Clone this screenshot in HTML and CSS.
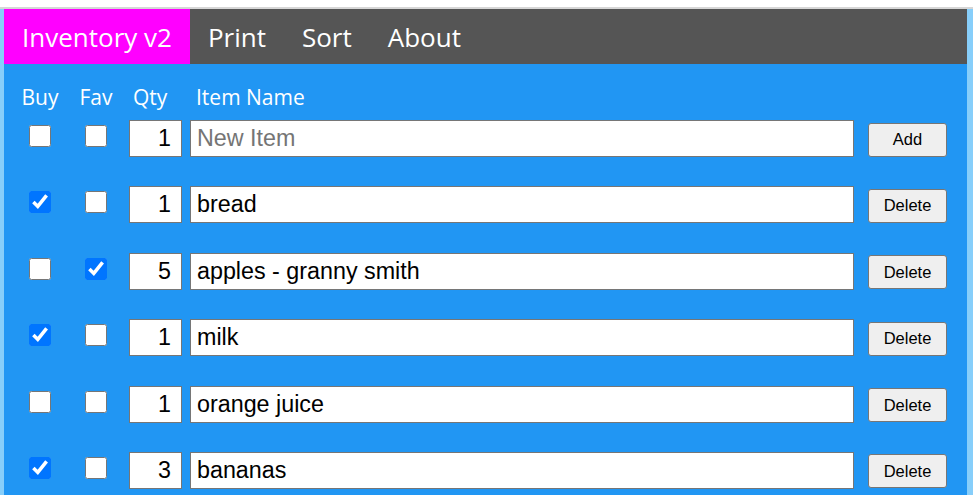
FILE: index.html
```html
<!DOCTYPE html>
<html>
<head>
<meta charset="utf-8">
<title>Inventory v2</title>
<link rel="stylesheet" href="styles.css">
</head>
<body>
<div class="topline"></div>
<div class="frame">
  <div class="app">
    <nav class="nav">
      <a class="nav-item brand">Inventory v2</a>
      <a class="nav-item">Print</a>
      <a class="nav-item">Sort</a>
      <a class="nav-item">About</a>
    </nav>
    <main class="main">
      <div class="cols head-row">
        <div class="head center">Buy</div>
        <div class="head center">Fav</div>
        <div class="head qty-h">Qty</div>
        <div class="head name-h">Item Name</div>
        <div class="head"></div>
      </div>
      <div class="cols rows">
        <div class="cell center"><input type="checkbox" class="cb"></div>
        <div class="cell center"><input type="checkbox" class="cb"></div>
        <div class="cell"><input type="text" class="qty" value="1"></div>
        <div class="cell"><input type="text" class="name" placeholder="New Item"></div>
        <div class="cell end"><button class="btn">Add</button></div>

        <div class="cell center"><input type="checkbox" class="cb" checked></div>
        <div class="cell center"><input type="checkbox" class="cb"></div>
        <div class="cell"><input type="text" class="qty" value="1"></div>
        <div class="cell"><input type="text" class="name" value="bread"></div>
        <div class="cell end"><button class="btn">Delete</button></div>

        <div class="cell center"><input type="checkbox" class="cb"></div>
        <div class="cell center"><input type="checkbox" class="cb" checked></div>
        <div class="cell"><input type="text" class="qty" value="5"></div>
        <div class="cell"><input type="text" class="name" value="apples - granny smith"></div>
        <div class="cell end"><button class="btn">Delete</button></div>

        <div class="cell center"><input type="checkbox" class="cb" checked></div>
        <div class="cell center"><input type="checkbox" class="cb"></div>
        <div class="cell"><input type="text" class="qty" value="1"></div>
        <div class="cell"><input type="text" class="name" value="milk"></div>
        <div class="cell end"><button class="btn">Delete</button></div>

        <div class="cell center"><input type="checkbox" class="cb"></div>
        <div class="cell center"><input type="checkbox" class="cb"></div>
        <div class="cell"><input type="text" class="qty" value="1"></div>
        <div class="cell"><input type="text" class="name" value="orange juice"></div>
        <div class="cell end"><button class="btn">Delete</button></div>

        <div class="cell center"><input type="checkbox" class="cb" checked></div>
        <div class="cell center"><input type="checkbox" class="cb"></div>
        <div class="cell"><input type="text" class="qty" value="3"></div>
        <div class="cell"><input type="text" class="name" value="bananas"></div>
        <div class="cell end"><button class="btn">Delete</button></div>
      </div>
    </main>
  </div>
</div>
</body>
</html>
```

FILE: styles.css
```css
html, body {
  margin: 0;
  padding: 0;
  background: #ffffff;
  height: 100%;
  overflow: hidden;
}

.topline {
  height: 7px;
  background: #ffffff;
  border-bottom: 2px solid #d6d6d6;
}

.frame {
  background: #87cefa;
  padding: 0 6px 0 4px;
  height: 486px;
}

.app {
  height: 100%;
  display: flex;
  flex-direction: column;
}

.nav {
  display: flex;
  height: 55px;
  background: #555555;
  font-family: "Open Sans", sans-serif;
  font-size: 26px;
}

.nav-item {
  display: flex;
  align-items: center;
  padding: 1px 18px 0;
  color: #ffffff;
}

.brand {
  background: #ff00ff;
}

.main {
  flex: 1;
  background: #2196f3;
  padding: 20px 0 0 13px;
}

.cols {
  display: grid;
  grid-template-columns: 46px 50px 53px 664px 85px;
  column-gap: 8px;
}

.head-row {
  height: 26px;
  margin-bottom: 10px;
}

.rows {
  row-gap: 29.4px;
  align-items: center;
}

.head {
  font-family: "Open Sans", sans-serif;
  font-size: 21px;
  color: #ffffff;
  line-height: 26px;
  white-space: nowrap;
}

.center {
  display: flex;
  justify-content: center;
}

.end {
  display: flex;
  justify-content: flex-end;
}

.qty-h {
  padding-left: 4px;
}

.name-h {
  padding-left: 6px;
}

.cell {
  height: 37px;
  align-items: center;
}

.cb {
  width: 22px;
  height: 22px;
  margin: 0 0 5px 0;
}

.qty, .name {
  box-sizing: border-box;
  height: 37px;
  width: 100%;
  margin: 0;
  border: 1px solid #767676;
  border-radius: 0;
  background: #ffffff;
  font-family: "Liberation Sans", Arial, sans-serif;
  font-size: 23.3px;
  color: #000000;
  outline: none;
}

.qty {
  text-align: right;
  padding: 0 10px 0 2px;
}

.name {
  padding: 0 6px;
}

.name::placeholder {
  color: #757575;
}

.btn {
  box-sizing: border-box;
  width: 79px;
  height: 34px;
  margin-top: 2px;
  background: #efefef;
  border: 1px solid #767676;
  border-radius: 3px;
  font-family: "Liberation Sans", Arial, sans-serif;
  font-size: 16.5px;
  color: #000000;
  padding: 0;
}
```
